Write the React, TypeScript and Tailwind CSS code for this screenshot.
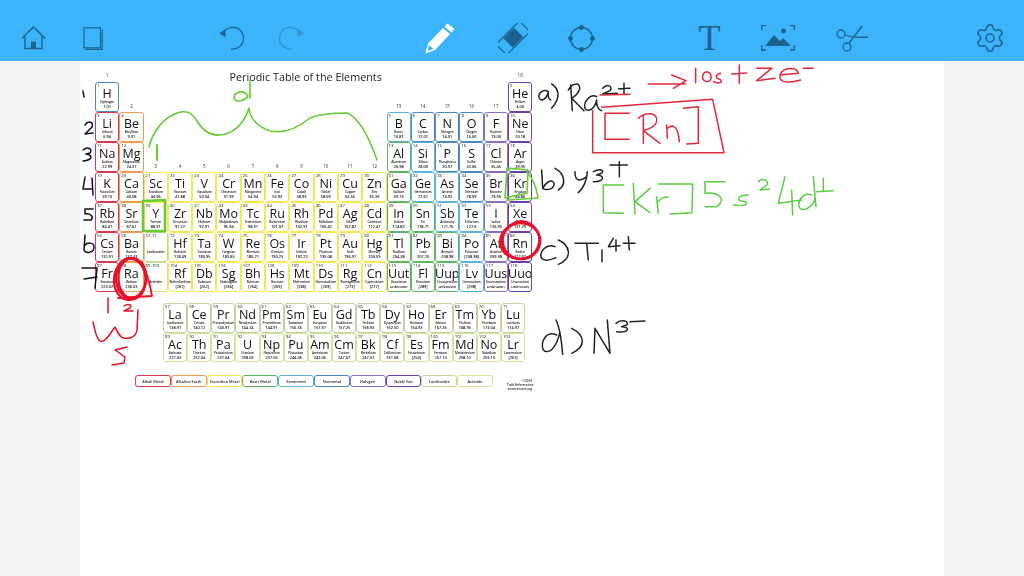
import { Settings } from 'lucide-react';

// ** element data: number symbol name mass category column row **
const ELEMENTS = `1 H Hydrogen 1.01 non 1 1
2 He Helium 4.00 noble 18 1
3 Li Lithium 6.94 alkali 1 2
4 Be Beryllium 9.01 earth 2 2
5 B Boron 10.81 semi 13 2
6 C Carbon 12.01 non 14 2
7 N Nitrogen 14.01 non 15 2
8 O Oxygen 16.00 non 16 2
9 F Fluorine 19.00 halogen 17 2
10 Ne Neon 20.18 noble 18 2
11 Na Sodium 22.99 alkali 1 3
12 Mg Magnesium 24.31 earth 2 3
13 Al Aluminum 26.98 basic 13 3
14 Si Silicon 28.09 semi 14 3
15 P Phosphorus 30.97 non 15 3
16 S Sulfur 32.06 non 16 3
17 Cl Chlorine 35.45 halogen 17 3
18 Ar Argon 39.95 noble 18 3
19 K Potassium 39.10 alkali 1 4
20 Ca Calcium 40.08 earth 2 4
21 Sc Scandium 44.96 trans 3 4
22 Ti Titanium 47.88 trans 4 4
23 V Vanadium 50.94 trans 5 4
24 Cr Chromium 51.99 trans 6 4
25 Mn Manganese 54.94 trans 7 4
26 Fe Iron 55.93 trans 8 4
27 Co Cobalt 58.93 trans 9 4
28 Ni Nickel 58.69 trans 10 4
29 Cu Copper 63.55 trans 11 4
30 Zn Zinc 65.39 trans 12 4
31 Ga Gallium 69.73 basic 13 4
32 Ge Germanium 72.61 semi 14 4
33 As Arsenic 74.92 semi 15 4
34 Se Selenium 78.09 non 16 4
35 Br Bromine 79.90 halogen 17 4
36 Kr Krypton 84.80 noble 18 4
37 Rb Rubidium 84.47 alkali 1 5
38 Sr Strontium 87.62 earth 2 5
39 Y Yttrium 88.91 trans 3 5
40 Zr Zirconium 91.22 trans 4 5
41 Nb Niobium 92.91 trans 5 5
42 Mo Molybdenum 95.94 trans 6 5
43 Tc Technetium 98.91 trans 7 5
44 Ru Ruthenium 101.07 trans 8 5
45 Rh Rhodium 102.91 trans 9 5
46 Pd Palladium 106.42 trans 10 5
47 Ag Silver 107.87 trans 11 5
48 Cd Cadmium 112.41 trans 12 5
49 In Indium 114.82 basic 13 5
50 Sn Tin 118.71 basic 14 5
51 Sb Antimony 121.76 semi 15 5
52 Te Tellurium 127.6 semi 16 5
53 I Iodine 126.90 halogen 17 5
54 Xe Xenon 131.29 noble 18 5
55 Cs Cesium 132.91 alkali 1 6
56 Ba Barium 137.33 earth 2 6
72 Hf Hafnium 178.49 trans 4 6
73 Ta Tantalum 180.95 trans 5 6
74 W Tungsten 183.85 trans 6 6
75 Re Rhenium 186.21 trans 7 6
76 Os Osmium 190.23 trans 8 6
77 Ir Iridium 192.22 trans 9 6
78 Pt Platinum 195.08 trans 10 6
79 Au Gold 196.97 trans 11 6
80 Hg Mercury 200.59 trans 12 6
81 Tl Thallium 204.38 basic 13 6
82 Pb Lead 207.20 basic 14 6
83 Bi Bismuth 208.98 basic 15 6
84 Po Polonium [208.98] semi 16 6
85 At Astatine 209.98 halogen 17 6
86 Rn Radon 222.02 noble 18 6
87 Fr Francium 223.02 alkali 1 7
88 Ra Radium 236.03 earth 2 7
104 Rf Rutherfordium [261] trans 4 7
105 Db Dubnium [262] trans 5 7
106 Sg Seaborgium [266] trans 6 7
107 Bh Bohrium [264] trans 7 7
108 Hs Hassium [269] trans 8 7
109 Mt Meitnerium [268] trans 9 7
110 Ds Darmstadtium [269] trans 10 7
111 Rg Roentgenium [273] trans 11 7
112 Cn Copernicium [277] trans 12 7
113 Uut Ununtrium unknown basic 13 7
114 Fl Flerovium [289] basic 14 7
115 Uup Ununpentium unknown basic 15 7
116 Lv Livermorium [298] semi 16 7
117 Uus Ununseptium unknown halogen 17 7
118 Uuo Ununoctium unknown noble 18 7`;

const RARE = `57 La Lanthanum 138.91 lanth 1 1
58 Ce Cerium 140.12 lanth 2 1
59 Pr Praseodymium 140.91 lanth 3 1
60 Nd Neodymium 144.24 lanth 4 1
61 Pm Promethium 144.91 lanth 5 1
62 Sm Samarium 150.36 lanth 6 1
63 Eu Europium 151.97 lanth 7 1
64 Gd Gadolinium 157.25 lanth 8 1
65 Tb Terbium 158.93 lanth 9 1
66 Dy Dysprosium 162.50 lanth 10 1
67 Ho Holmium 164.93 lanth 11 1
68 Er Erbium 167.26 lanth 12 1
69 Tm Thulium 168.93 lanth 13 1
70 Yb Ytterbium 173.04 lanth 14 1
71 Lu Lutetium 174.97 lanth 15 1
89 Ac Actinium 227.03 act 1 2
90 Th Thorium 232.04 act 2 2
91 Pa Protactinium 231.04 act 3 2
92 U Uranium 238.03 act 4 2
93 Np Neptunium 237.05 act 5 2
94 Pu Plutonium 244.06 act 6 2
95 Am Americium 243.06 act 7 2
96 Cm Curium 247.07 act 8 2
97 Bk Berkelium 247.07 act 9 2
98 Cf Californium 251.08 act 10 2
99 Es Einsteinium [254] act 11 2
100 Fm Fermium 257.10 act 12 2
101 Md Mendelevium 258.10 act 13 2
102 No Nobelium 259.10 act 14 2
103 Lr Lawrencium [262] act 15 2`;

const BORDER: Record<string, string> = {
  alkali: 'border-[#d8374f]',
  earth: 'border-[#ee9c4a]',
  trans: 'border-[#f6e64f]',
  basic: 'border-[#5cb860]',
  semi: 'border-[#5ab4dc]',
  non: 'border-[#4a86c4]',
  halogen: 'border-[#8a6cc4]',
  noble: 'border-[#6a3ea8]',
  lanth: 'border-[#bcd89a]',
  act: 'border-[#d6e28e]',
};

const LEGEND = [
  ['Alkali Metal', 'alkali'],
  ['Alkaline Earth', 'earth'],
  ['Transition Metal', 'trans'],
  ['Basic Metal', 'basic'],
  ['Semimetal', 'semi'],
  ['Nonmetal', 'non'],
  ['Halogen', 'halogen'],
  ['Noble Gas', 'noble'],
  ['Lanthanide', 'lanth'],
  ['Actinide', 'act'],
];

const GROUP_LABELS = [
  [1, 1, 0], [18, 18, 0], [2, 2, 1], [13, 13, 1], [14, 14, 1], [15, 15, 1], [16, 16, 1], [17, 17, 1],
  [3, 3, 3], [4, 4, 3], [5, 5, 3], [6, 6, 3], [7, 7, 3], [8, 8, 3], [9, 9, 3], [10, 10, 3], [11, 11, 3], [12, 12, 3],
];

const parse = (text: string) => text.split('\n').map((line) => {
  const [num, sym, name, mass, cat, col, row] = line.split(' ');
  return { num, sym, name, mass, cat, col: Number(col), row: Number(row) };
});

const Cell = ({ num, sym, name, mass, cat, col, row, offset }: {
  num: string; sym?: string; name: string; mass?: string; cat: string; col: number; row: number; offset: number;
}) => (
  <div
    className={`flex flex-col items-center overflow-hidden rounded-[3px] border-[1.5px] bg-white text-[#111] ${BORDER[cat]}`}
    style={{ gridColumn: col, gridRow: row + offset }}
  >
    <div className="h-[5px] w-full pl-[1px] text-left text-[4.3px] leading-[5px]">{num}</div>
    <div className="h-[12px] text-[12.5px] leading-[12px] font-medium">{sym}</div>
    <div className="h-[5px] whitespace-nowrap text-[3.1px] leading-[5px] font-semibold tracking-tight">{name}</div>
    <div className="text-[3.9px] leading-[4.5px] font-semibold">{mass}</div>
  </div>
);

const Ink = () => (
  <svg
    className="absolute inset-0 h-full w-full"
    viewBox="80 61 864 515"
    fill="none"
    strokeLinecap="round"
    strokeLinejoin="round"
  >
    {/* left margin row numbers */}
    <g stroke="#111" strokeWidth="1.5">
      <path d="M83 91 L84 97" />
      <path d="M85 125 C88 120 94 122 92 127 L85 134 L93 133" />
      <path d="M83 150 C88 146 93 149 90 153 L86 154 C93 155 93 160 83 161" />
      <path d="M85 177 L83 189 L92 189 M92 178 L93 195" />
      <path d="M93 209 L85 209 L85 214 C91 213 94 217 91 220 L84 220" />
      <path d="M85 235 L84 250 C86 254 94 253 94 247 C94 242 87 242 84 246" />
      <path d="M82 268 L97 268 L95 288 M84 279 L97 277" />
    </g>
    {/* green bracket over the d block and marks on Y, Kr */}
    <g stroke="#66cc33" strokeWidth="1.6">
      <path d="M149 147 C153 130 165 117 177 113 C186 110 192 112 197 121 C203 131 210 136 220 135 C233 134 244 124 249 108 C250 118 256 126 270 131 C285 134 298 128 310 118 C320 114 335 113 347 113 C360 118 370 140 377 160" />
      <path d="M157 145 L157 160" strokeWidth="2" />
      <path d="M248 96 C243 89 234 92 234 98 C235 103 245 101 248 96 M250 80 L250 98" />
      <path d="M143 201 L165 200 L165 231 L143 231 Z" strokeWidth="2.6" />
      <path d="M507 168 L505 198 L527 193 L528 170 Z M527 172 C534 180 537 190 538 198 L507 200" />
    </g>
    {/* red circles and working */}
    <g stroke="#e8102a">
      <ellipse cx="131" cy="278" rx="15" ry="20" strokeWidth="2.6" />
      <ellipse cx="130" cy="279" rx="16" ry="21" strokeWidth="2.2" transform="rotate(6 130 279)" />
      <ellipse cx="132" cy="279" rx="13.5" ry="20" strokeWidth="2" transform="rotate(-5 132 279)" />
      <path d="M142 262 C148 275 150 285 152 296 L118 298" strokeWidth="1.8" />
      <ellipse cx="521" cy="241" rx="19" ry="18" strokeWidth="2.6" />
      <ellipse cx="520" cy="241" rx="20" ry="18" strokeWidth="2.2" transform="rotate(-10 520 241)" />
      <ellipse cx="521" cy="240" rx="18" ry="19" strokeWidth="1.8" transform="rotate(12 521 240)" />
      <g strokeWidth="1.5">
        <path d="M108 298 L108 313" />
        <path d="M124 306 C128 303 133 305 130 308 L124 311 L133 311" />
        <path d="M93 322 C95 330 96 339 100 341 C105 343 109 335 115 327 C118 333 120 338 124 338 C130 339 136 337 137 330 L138 310" />
        <path d="M127 347 L115 350 L125 357 L124 363 L112 365" />
      </g>
    </g>
    {/* answers a) and b), drawn in zoomed coordinates */}
    <g transform="translate(530 60) scale(0.3333)" strokeWidth="4.5">
      <g stroke="#222">
        <path d="M55 95 C40 85 22 100 28 115 C35 125 50 118 55 95 C53 105 55 118 62 120" />
        <path d="M65 72 C85 85 95 110 65 145" />
        <path d="M122 75 L127 152 M115 90 C130 65 155 68 148 90 C140 110 125 112 125 115 L162 152" />
        <path d="M200 110 C180 100 160 125 165 145 C175 160 195 145 200 120 C198 135 205 150 215 152" />
        <path d="M218 85 C232 68 250 80 240 92 L218 102 L262 100 M282 70 L282 103 M266 86 L300 85" />
        <path d="M35 330 L38 385 C60 345 85 370 65 385 C55 390 40 390 38 385" />
        <path d="M75 325 C105 340 110 375 85 390" />
        <path d="M135 335 C135 365 150 365 170 350 M172 335 C170 365 160 385 145 398" />
        <path d="M190 335 C210 325 225 330 215 340 L200 345 C225 345 225 365 190 365" />
        <path d="M240 315 L292 315 M268 305 L268 350" />
      </g>
      <g stroke="#e3283c">
        <path d="M210 105 L300 103" />
        <path d="M355 72 L465 72 M425 45 L468 62 L430 85" />
        <path d="M497 25 L497 68" />
        <path d="M530 35 C515 38 512 62 530 65 C548 65 548 38 530 35" />
        <path d="M572 40 C555 45 555 55 570 58 C582 68 565 72 550 65" />
        <path d="M628 15 L628 70 M605 42 L650 39" />
        <path d="M680 25 L725 25 L680 62 L735 55" />
        <path d="M750 45 L805 40 C800 20 760 20 750 45 C745 70 780 70 812 60" />
        <path d="M820 25 L850 25" />
        <path d="M215 142 L548 118 L582 278 L188 278 L188 152" />
        <path d="M298 160 L225 160 L225 238 L298 238" />
        <path d="M340 165 L340 250 M325 175 C345 155 385 155 380 185 C375 205 345 210 340 212 L390 250" />
        <path d="M410 195 L412 235 M412 205 C430 190 445 200 448 245" />
        <path d="M460 145 L505 140 L505 250 L470 252" />
      </g>
      <g stroke="#5ccc44">
        <path d="M280 375 L220 375 L220 458 L280 460" />
        <path d="M310 370 L315 462 M360 385 L315 425 L360 458" />
        <path d="M380 410 L385 460 M385 425 C395 410 410 410 415 412" />
        <path d="M385 372 L488 372 L486 458 L420 462" />
        <path d="M585 365 L525 365 L525 400 C570 395 590 420 560 440 L525 440" />
        <path d="M655 405 C630 405 620 415 630 422 C660 425 660 440 610 435" />
        <path d="M685 365 C700 350 720 365 710 375 L690 390 L718 388" />
        <path d="M765 350 L745 430 L815 420 M785 390 L788 465" />
        <path d="M845 405 C815 395 800 430 810 445 C825 455 850 440 855 415 M850 350 L858 440" />
        <path d="M880 355 L880 395 M860 395 L910 392" />
      </g>
    </g>
    {/* answers c) and d) */}
    <g transform="translate(530 215) scale(0.3333)" stroke="#222" strokeWidth="4.5">
      <path d="M75 95 C50 85 25 110 35 130 C45 140 60 135 78 128" />
      <path d="M85 75 C120 90 130 130 85 148" />
      <path d="M135 85 L205 85 M170 85 L175 135" />
      <path d="M216 105 L216 140" />
      <path d="M250 70 L235 95 L270 92 M258 75 L258 108" />
      <path d="M280 85 L315 85 M295 65 L298 105" />
      <path d="M80 360 C50 345 30 380 40 405 C55 420 80 400 90 350 M78 315 C90 340 95 380 98 418" />
      <path d="M125 340 C165 360 170 395 125 415" />
      <path d="M192 415 L195 340 L240 415 L232 315" />
      <path d="M258 325 C275 310 300 320 290 330 L275 335 C300 335 300 355 260 350" />
      <path d="M300 320 L345 318" />
    </g>
  </svg>
);

const Toolbar = () => (
  <div className="flex h-[61px] shrink-0 items-center bg-[#3bb4fb] pt-[15px] pl-[21px] text-[#1d628f]">
    {/* home */}
    <svg width="25" height="24" viewBox="0 0 25 24" fill="none" stroke="currentColor" strokeWidth="1.4">
      <path d="M0.8 12.5 L12.5 1 L24.2 12.5 M4 10 L4 22.5 L21 22.5 L21 10" />
      <rect x="10" y="15.5" width="5" height="7" fill="currentColor" stroke="none" />
    </svg>
    {/* notebook */}
    <svg className="ml-[37px]" width="20" height="23" viewBox="0 0 20 23" fill="none" stroke="currentColor" strokeWidth="1.2">
      <rect x="1" y="0.8" width="16.5" height="20" />
      <path d="M2 22.3 L19.2 22.3 L19.2 2.5" />
    </svg>
    {/* undo */}
    <svg className="ml-[115px]" width="27" height="24" viewBox="0 0 27 24" fill="none" stroke="currentColor" strokeWidth="1.3">
      <path d="M5 6.5 C9 1 16 0 21 3 C27 8 27 17 21 21 C18 23.2 16 23.4 13 23" />
      <path d="M1 7.5 L7.5 11 L7.5 3 Z" fill="currentColor" stroke="none" />
    </svg>
    {/* redo */}
    <svg className="ml-[33px] opacity-40" width="27" height="24" viewBox="0 0 27 24" fill="none" stroke="currentColor" strokeWidth="1.3">
      <path d="M22 6.5 C18 1 11 0 6 3 C0 8 0 17 6 21 C9 23.2 11 23.4 14 23" />
      <path d="M26 7.5 L19.5 11 L19.5 3 Z" fill="currentColor" stroke="none" />
    </svg>
    {/* pencil */}
    <svg className="ml-[120px]" width="30" height="31" viewBox="0 0 30 31" fill="#fff">
      <path d="M18 5 L25 11 L10 27 L2 30 L0.5 31 L1 27 L3.5 20 Z M4 22 L2.6 28 L8.4 26 Z" fillRule="evenodd" />
      <path d="M19.5 3.5 L22.5 0.5 L29.5 6 L26.5 9.5 Z" />
    </svg>
    {/* eraser */}
    <svg className="ml-[43px]" width="30" height="30" viewBox="0 0 30 30" fill="none" stroke="currentColor" strokeWidth="1.2">
      <rect x="7.5" y="-1.5" width="15" height="33" rx="2.5" transform="rotate(45 15 15)" />
      <rect x="8.5" y="7" width="13" height="15" fill="currentColor" stroke="none" transform="rotate(45 15 15)" />
    </svg>
    {/* shape */}
    <svg className="ml-[40px]" width="27" height="27" viewBox="0 0 27 27" fill="none" stroke="currentColor" strokeWidth="1.3">
      <circle cx="13.5" cy="13.5" r="11" />
      <g fill="currentColor" stroke="none">
        <circle cx="13.5" cy="2.5" r="2.4" />
        <circle cx="13.5" cy="24.5" r="2.4" />
        <circle cx="2.5" cy="13.5" r="2.4" />
        <circle cx="24.5" cy="13.5" r="2.4" />
      </g>
    </svg>
    <span className="ml-[102px] w-[25px] text-center font-['Liberation_Serif',serif] text-[36px] leading-[35px]">T</span>
    {/* image */}
    <svg className="ml-[39px]" width="34" height="26" viewBox="0 0 34 26" fill="none" stroke="currentColor" strokeWidth="1.3">
      <path d="M0.7 5 L0.7 0.7 L5 0.7 M29 0.7 L33.3 0.7 L33.3 5 M0.7 20 L0.7 25 L5 25 M29 25 L33.3 25 L33.3 20" />
      <g fill="currentColor" stroke="none">
        <circle cx="22.5" cy="6" r="2.4" />
        <path d="M4 21 L13 10 L19 16 L22 13 L30 21 Z" />
      </g>
    </svg>
    {/* scissors */}
    <svg className="ml-[41px]" width="33" height="27" viewBox="0 0 33 27" fill="none" stroke="currentColor" strokeWidth="1.3">
      <circle cx="5" cy="9" r="4" />
      <circle cx="11" cy="22" r="4" />
      <path d="M9 10 C14 12 25 13 32 12 M13 18 L26 1" />
    </svg>
    <Settings className="ml-[105px]" size={32} strokeWidth={1.15} />
  </div>
);

const App = () => {
  return (
    <div className="flex h-[576px] w-[1024px] flex-col overflow-hidden bg-[#f2f2f2] font-['Open_Sans',sans-serif]">
      <Toolbar />
      <div className="relative ml-[80px] w-[864px] flex-1 bg-white">
        <div className="flex flex-col pt-[8px] pl-[15px] blur-[0.3px]">
          <div className="grid grid-cols-[repeat(18,24.3px)] grid-rows-[13px_repeat(7,30px)]">
            <div className="col-start-2 col-end-18 row-start-1 pr-[16px] pt-[1px] text-center text-[10.8px] leading-[13px] text-[#222]">
              Periodic Table of the Elements
            </div>
            {GROUP_LABELS.map(([n, col, row]) => (
              <div
                key={n}
                className={`self-end text-center text-[4.5px] leading-[5px] text-[#333] ${row === 0 ? 'pb-[4px]' : 'pb-[3px]'}`}
                style={{ gridColumn: col, gridRow: row + 1 }}
              >
                {n}
              </div>
            ))}
            {parse(ELEMENTS).map((el) => (
              <Cell key={el.num} {...el} offset={1} />
            ))}
            <Cell num="57-71" name="Lanthanides" cat="lanth" col={3} row={6} offset={1} />
            <Cell num="89-103" name="Actinides" cat="act" col={3} row={7} offset={1} />
          </div>
          <div className="mt-[11px] ml-[68px] grid grid-cols-[repeat(15,24.15px)] auto-rows-[29.7px]">
            {parse(RARE).map((el) => (
              <Cell key={el.num} {...el} offset={0} />
            ))}
          </div>
          <div className="mt-[13px] ml-[40px] flex items-start">
            {LEGEND.map(([label, cat]) => (
              <div
                key={cat}
                className={`flex h-[12px] w-[35.8px] items-center justify-center rounded-[3px] border-[1.5px] bg-white text-[3.8px] font-semibold text-[#222] ${BORDER[cat]}`}
              >
                {label}
              </div>
            ))}
            <div className="mt-[4px] ml-[14px] w-[25px] text-right text-[3px] leading-[4px] font-semibold text-[#222]">
              <div>©2014</div>
              <div className="whitespace-nowrap">Todd Helmenstine</div>
              <div className="whitespace-nowrap">sciencenotes.org</div>
            </div>
          </div>
        </div>
        <Ink />
      </div>
    </div>
  );
};

export default App;
